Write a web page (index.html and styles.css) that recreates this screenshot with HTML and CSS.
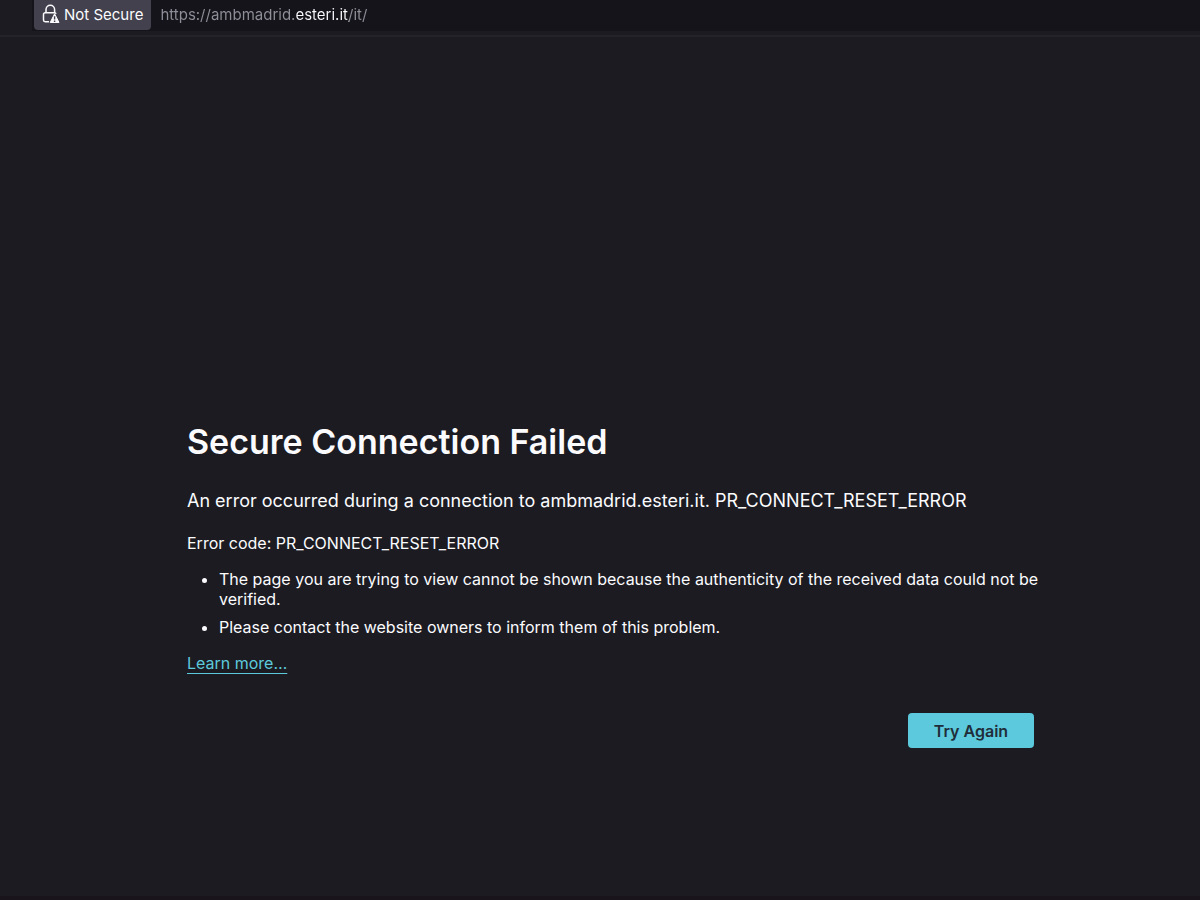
FILE: index.html
```html
<!DOCTYPE html>
<html lang="en">
<head>
    <meta charset="UTF-8">
    <meta name="viewport" content="width=device-width, initial-scale=1.0">
    <title>Secure Connection Failed</title>
    <link rel="stylesheet" href="styles.css">
</head>
<body>
    <!-- Address bar -->
    <header class="toolbar">
        <div class="urlbar">
            <button class="identity" type="button">
                <svg class="lock" viewBox="0 0 18 20" aria-hidden="true">
                    <path d="M4 9V5.500a4.300 4.300 0 0 1 8.600 0V9" fill="none" stroke="#fbfbfe" stroke-width="1.500"/>
                    <path d="M7 17.800H3.200A1.700 1.700 0 0 1 1.500 16.100V10.400A1.700 1.700 0 0 1 3.200 8.700H12.600a1.700 1.700 0 0 1 1.500 1" fill="none" stroke="#fbfbfe" stroke-width="1.500"/>
                    <path d="M12.600 9.800 17 18.500H8.200Z" fill="#fbfbfe" stroke="#fbfbfe" stroke-linejoin="round"/>
                    <path d="M12.600 12.200v3.200M12.600 16.500v1.400" stroke="#42414d" stroke-width="1.400"/>
                </svg>
                Not Secure
            </button>
            <input class="url" type="text" value="https://ambmadrid.esteri.it/it/" aria-label="Address" spellcheck="false">
        </div>
    </header>

    <!-- Error message -->
    <main class="container">
        <h1>Secure Connection Failed</h1>
        <p class="description">An error occurred during a connection to ambmadrid.esteri.it. PR_CONNECT_RESET_ERROR</p>
        <p class="code">Error code: PR_CONNECT_RESET_ERROR</p>
        <ul>
            <li>The page you are trying to view cannot be shown because the authenticity of the received data could not be verified.</li>
            <li>Please contact the website owners to inform them of this problem.</li>
        </ul>
        <a class="learn-more" href="#">Learn more…</a>
        <div class="buttons">
            <button class="try-again" type="button">Try Again</button>
        </div>
    </main>
</body>
</html>
```
FILE: styles.css
```css
* {
    box-sizing: border-box;
}

body {
    margin: 0;
    min-height: 100vh;
    display: flex;
    flex-direction: column;
    background-color: #1c1b22;
    border-bottom: 4px solid #19141c;
    color: #fbfbfe;
    font-family: Inter, "Liberation Sans", sans-serif;
    font-size: 16px;
    line-height: 20px;
}

/* Address bar */
.toolbar {
    padding: 0 0 4px 32px;
    background-color: #1c1b22;
    border-bottom: 2px solid #24232a;
}

.urlbar {
    display: flex;
    align-items: flex-start;
    height: 31px;
    padding-left: 2px;
    background-color: #15141a;
}

.identity {
    display: flex;
    align-items: center;
    gap: 4px;
    height: 30px;
    padding: 0 8px 2px;
    border: none;
    border-radius: 0 0 4px 4px;
    background-color: #42414d;
    color: #fbfbfe;
    font-family: inherit;
    font-size: 15px;
    white-space: nowrap;
}

.lock {
    width: 18px;
    height: 20px;
}

/* The host name is brighter than the rest of the address */
.url {
    flex: 1;
    min-width: 0;
    height: 30px;
    padding: 0 0 2px 9px;
    border: none;
    outline: none;
    background: linear-gradient(to right, #8f8f9a 145px, #fbfbfe 145px, #fbfbfe 198px, #8f8f9a 198px);
    background-clip: text;
    -webkit-background-clip: text;
    color: transparent;
    font-family: inherit;
    font-size: 15px;
}

/* Error message */
.container {
    padding: 382px 166px 40px 187px;
}

h1 {
    margin: 0 0 24px;
    font-size: 34px;
    line-height: 46px;
    font-weight: 600;
}

.description {
    margin: 0 0 20px;
    font-size: 18px;
    line-height: 24px;
}

.code {
    margin: 0 0 16px;
}

ul {
    margin: 0 -8px 16px 0;
    padding-left: 32px;
}

li {
    margin-bottom: 8px;
}

.learn-more {
    color: #5cc9dc;
    text-underline-offset: 4px;
}

.buttons {
    display: flex;
    justify-content: flex-end;
    margin-top: 40px;
}

.try-again {
    min-width: 126px;
    height: 35px;
    border: none;
    border-radius: 4px;
    background-color: #5cc9dc;
    color: #1f2d3a;
    font-family: inherit;
    font-size: 16px;
    font-weight: 600;
    cursor: pointer;
}

.try-again:hover {
    background-color: #80ebff;
}

@media screen and (max-width: 800px) {
    .container {
        padding: 120px 24px 40px;
    }
}
```
